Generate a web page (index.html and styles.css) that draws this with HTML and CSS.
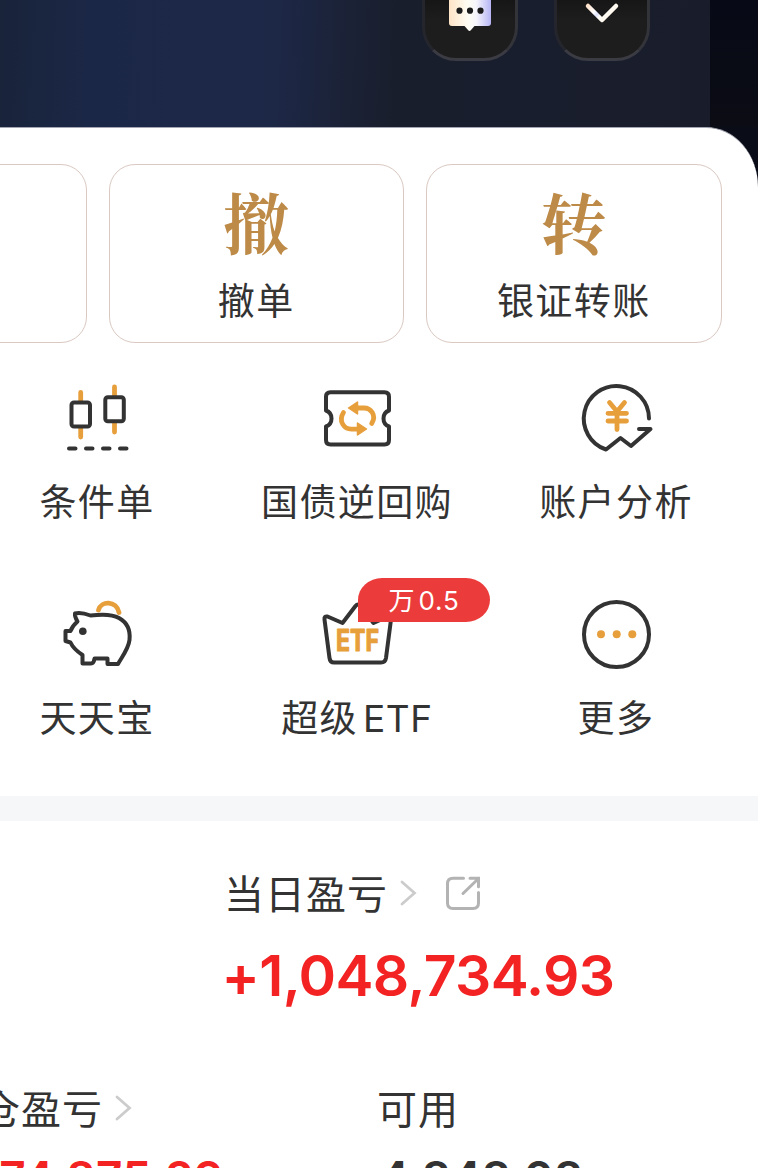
FILE: index.html
```html
<!DOCTYPE html>
<html lang="zh-CN">
<head>
<meta charset="utf-8">
<title>账户</title>
<link rel="stylesheet" href="styles.css">
</head>
<body>
<main class="screen">
  <header class="hero">
    <div class="hero-edge"></div>
    <div class="hero-buttons">
      <div class="hero-btn">
        <svg width="44" height="34" viewBox="448 -2 44 34">
          <defs><linearGradient id="bubble" x1="0" x2="1"><stop offset="0" stop-color="#ffe4c6"/><stop offset=".45" stop-color="#fffdf3"/><stop offset=".65" stop-color="#f6f5fb"/><stop offset="1" stop-color="#b6b5f4"/></linearGradient></defs>
          <path d="M449-8H491V23q0 3-3 3H474.500L471 30q-1.500 2-3 0L464.500 26H452q-3 0-3-3z" fill="url(#bubble)"/>
          <g fill="#1b1b1b"><circle cx="459.500" cy="10.700" r="3.100"/><circle cx="470" cy="10.700" r="3.100"/><circle cx="480.500" cy="10.700" r="3.100"/></g>
        </svg>
      </div>
      <div class="hero-btn">
        <svg width="44" height="34" viewBox="580 -2 44 34">
          <defs><linearGradient id="chev" x1="0" x2="1" y1="0" y2=".5"><stop offset="0" stop-color="#ffe3cc"/><stop offset=".35" stop-color="#fff"/><stop offset=".5" stop-color="#dfe4ff"/><stop offset=".62" stop-color="#fffef8"/><stop offset="1" stop-color="#fff6e8"/></linearGradient></defs>
          <path d="M588 6l14 14L616 6" fill="none" stroke="url(#chev)" stroke-width="4.500" stroke-linecap="round" stroke-linejoin="round"/>
        </svg>
      </div>
    </div>
  </header>

  <section class="sheet">
    <div class="cards">
      <div class="card"></div>
      <div class="card"><span class="card-glyph">撤</span><span class="label">撤单</span></div>
      <div class="card"><span class="card-glyph">转</span><span class="label">银证转账</span></div>
    </div>

    <div class="tools">
      <div class="tool">
        <svg class="icon" viewBox="57 378 80 80">
          <path class="gold" d="M80.700 392.500v11M80.700 428v9M114.500 387v10M114.500 423v9"/>
          <rect class="ink candle" x="71.500" y="402.500" width="18.500" height="24" rx="2.500"/>
          <rect class="ink candle" x="105.300" y="397.300" width="18.500" height="24" rx="2.500"/>
          <path class="ink" d="M69 448.500h6.500M86 448.500h6.500M103 448.500h6.500M120 448.500h6.500"/>
        </svg>
        <span class="label">条件单</span>
      </div>
      <div class="tool">
        <svg class="icon" viewBox="317 378 80 80">
          <path class="ink" d="M330.500 392.300H384.500q4.500 0 4.500 4.500V410.500Q383.500 412.500 383.500 418.500T389 426.500V440q0 4.500-4.500 4.500H330.500q-4.500 0-4.500-4.500V426.500Q331.500 424.500 331.500 418.500T326 410.500V396.800q0-4.500 4.500-4.500z"/>
          <path class="gold" d="M343.500 412.500C338 421 344 429.500 352 429.200H358M371.700 423.500C377 415 370.500 408 364 408H358"/>
          <path class="goldfill" d="M348.500 408l9-6v12zM366.500 429l-9-6v12z"/>
        </svg>
        <span class="label">国债逆回购</span>
      </div>
      <div class="tool">
        <svg class="icon" viewBox="576 378 80 80">
          <path class="ink" d="M649 418.500A32.600 32.600 0 1 0 606 449.500L620.500 438L631 446L650.500 429H639"/>
          <path class="gold" d="M609.500 402.500L617 411.500L624.500 402.500M617 412v17.500M608 413.300h18.500M608 421h18.500"/>
        </svg>
        <span class="label">账户分析</span>
      </div>
      <div class="tool">
        <svg class="icon" viewBox="57 594 80 80">
          <path class="gold" d="M98.500 610C101 600.500 116.500 600.500 119 612.500"/>
          <path class="ink" d="M75 613.500C78 612.500 84 613 90.500 615.500C106 613.500 113 614.500 119 618C128 623 130.500 631 129.500 640C128.500 649 121.500 657.500 118 664H107.500V658.500H94.500C94 662 92.500 663.500 91 663.500H82.500V655C76.500 651 73 648 70.500 642.500L65.500 641V631H70.500C72 627 74 624.500 77.500 621.500C76 619 74.500 616.500 75 613.500z"/>
          <circle cx="82.800" cy="631.200" r="3.800" fill="#333"/>
        </svg>
        <span class="label">天天宝</span>
      </div>
      <div class="tool">
        <svg class="icon" viewBox="317 594 80 80">
          <path class="ink" d="M327.500 616.500L342.500 623L355.500 606Q358 603 360.500 606L373.500 623L388 616.500Q391.500 616 391 619.500L386 658Q385.300 662.500 381 662.500H334Q330 662.500 329.500 658L324.500 619.500Q324 616 327.500 616.500z"/>
          <text class="etf" x="357.500" y="651.300" textLength="43" lengthAdjust="spacingAndGlyphs">ETF</text>
        </svg>
        <span class="badge">万<span class="rate">0.5</span></span>
        <span class="label">超级<span class="latin">ETF</span></span>
      </div>
      <div class="tool">
        <svg class="icon" viewBox="576 594 80 80">
          <circle class="ink" cx="616.500" cy="634.500" r="32.500"/>
          <g class="dots"><circle cx="601" cy="634.300" r="4"/><circle cx="616.700" cy="634.300" r="4"/><circle cx="632.300" cy="634.300" r="4"/></g>
        </svg>
        <span class="label">更多</span>
      </div>
    </div>
  </section>

  <section class="assets">
    <div class="today">
      <div class="row">
        <span class="title">当日盈亏</span>
        <svg class="arrow" width="18" height="28" viewBox="0 0 18 28"><path d="M2 3l12.500 11L2 25"/></svg>
        <svg class="share" width="38" height="38" viewBox="443 875 38 38"><path d="M462.500 879.300H452q-5.500 0-5.500 5.500V904q0 5.500 5.500 5.500H472q5.500 0 5.500-5.500V893.500M469 879.300h8.500v8.500M477 880L462 894.500"/></svg>
      </div>
      <div class="amount">+1,048,734.93</div>
    </div>
    <div class="stats">
      <div class="stat">
        <div class="row"><span class="title">持仓盈亏</span><svg class="arrow" width="18" height="28" viewBox="0 0 18 28"><path d="M2 3l12.500 11L2 25"/></svg></div>
        <div class="value red">+374,875.29</div>
      </div>
      <div class="stat available">
        <div class="row"><span class="title">可用</span></div>
        <div class="value">4,848.08</div>
      </div>
    </div>
  </section>
</main>
</body>
</html>
```
FILE: styles.css
```css
* { box-sizing: border-box; }
body {
  margin: 0;
  background: #fff;
  color: #333;
  font-family: "Noto Sans CJK SC", sans-serif;
}
.screen { width: 758px; height: 1168px; overflow: hidden; background: linear-gradient(#0a0d17, #0a0d17 190px, #fff 190px); }
.hero {
  position: relative;
  height: 127px;
  background: linear-gradient(92deg, #19233a 0, #1b2746 90px, #1d2849 200px, #1d2746 280px, #1b2236 350px, #191e2c 400px, #191e2e 500px, #191d2b 710px);
}
.hero-edge {
  position: absolute;
  left: 710px;
  top: 0;
  width: 48px;
  height: 127px;
  background: linear-gradient(#070a16, #0b0c14);
}
.hero-buttons { position: relative; display: flex; gap: 36px; padding-left: 422px; }
.hero-btn {
  display: flex;
  justify-content: center;
  width: 96px;
  height: 61px;
  border: solid #303037;
  border-width: 0 3px 3px;
  border-color: #303037 #33333a #3b3b43 #25262d;
  border-radius: 0 0 34px 34px;
  background: linear-gradient(#161616, #1d1d1d 20px);
}
.hero-btn svg { margin-top: -2px; }
.sheet {
  height: 669px;
  padding-top: 36px;
  background: #fff;
  border-top: 1px solid #a3a5b2;
  border-radius: 0 52px 0 0 / 0 60px 0 0;
}
.cards { display: flex; gap: 22px; width: 930px; margin-left: -209px; }
.card {
  display: flex;
  flex-direction: column;
  align-items: center;
  flex: 0 0 295.500px;
  height: 179px;
  border: 1.500px solid #dac9c2;
  border-radius: 26px;
}
.card-glyph {
  height: 109px;
  font: 700 66px/112px "Noto Serif CJK SC", "Noto Sans CJK SC", serif;
  color: #bd8a48;
}
.label { font-size: 37px; line-height: 50px; letter-spacing: 1.400px; white-space: nowrap; }
.tools { display: grid; grid-template-columns: 260px 260px 258px; grid-auto-rows: 216px; margin: 35px 0 0 -33px; }
.tool { position: relative; display: flex; flex-direction: column; align-items: center; }
.icon { width: 80px; height: 80px; margin-bottom: 17px; }
.ink { fill: none; stroke: #333; stroke-width: 4; stroke-linecap: round; stroke-linejoin: round; }
.candle { fill: #fff; }
.gold { fill: none; stroke: #e79f3c; stroke-width: 4.800; stroke-linecap: round; stroke-linejoin: round; }
.goldfill, .dots { fill: #e79f3c; stroke: #e79f3c; stroke-linejoin: round; }
.goldfill { stroke-width: 1.500; }
.dots { stroke: none; }
.etf { font: 700 30px Inter, sans-serif; fill: #e79f3c; stroke: #e79f3c; stroke-width: 1.200; stroke-linejoin: round; text-anchor: middle; }
.latin { font-family: Inter, sans-serif; font-size: 37px; margin-left: 5px; letter-spacing: .6px; }
.badge {
  position: absolute;
  left: 131px;
  top: -16px;
  width: 132px;
  height: 44px;
  border-radius: 24px 24px 24px 0 / 22px 22px 22px 0;
  background: #eb3b3b;
  color: #fff;
  font: 400 26px/41px "Noto Sans CJK SC", sans-serif;
  text-align: center;
}
.rate { font: 400 26px Inter, sans-serif; letter-spacing: .8px; margin-left: 4px; }
.assets { height: 372px; border-top: 25px solid #f5f7f9; background: #fff; padding-top: 42px; }
.today { padding-left: 224px; }
.row { display: flex; align-items: center; height: 60px; }
.title { font-size: 40px; letter-spacing: 1px; line-height: 58px; padding-bottom: 2px; white-space: nowrap; }
.arrow { margin-left: 12px; }
.arrow path { fill: none; stroke: #ccc; stroke-width: 2.800; stroke-linecap: round; }
.share { margin-left: 26px; }
.share path { fill: none; stroke: #b3b3b3; stroke-width: 3; stroke-linecap: round; }
.amount { height: 80px; font: 600 57px/106px Inter, sans-serif; color: #f42323; white-space: nowrap; letter-spacing: -.65px; margin-left: -2.500px; }
.stats { display: flex; margin-top: 75px; }
.stat { width: 438px; flex: none; margin-left: -61px; }
.stat.available { margin-left: 0; }
.value { font: 600 46px/81px Inter, sans-serif; white-space: nowrap; margin-left: 2px; }
.value.red { color: #f42323; letter-spacing: .2px; margin-left: 0; }
```
